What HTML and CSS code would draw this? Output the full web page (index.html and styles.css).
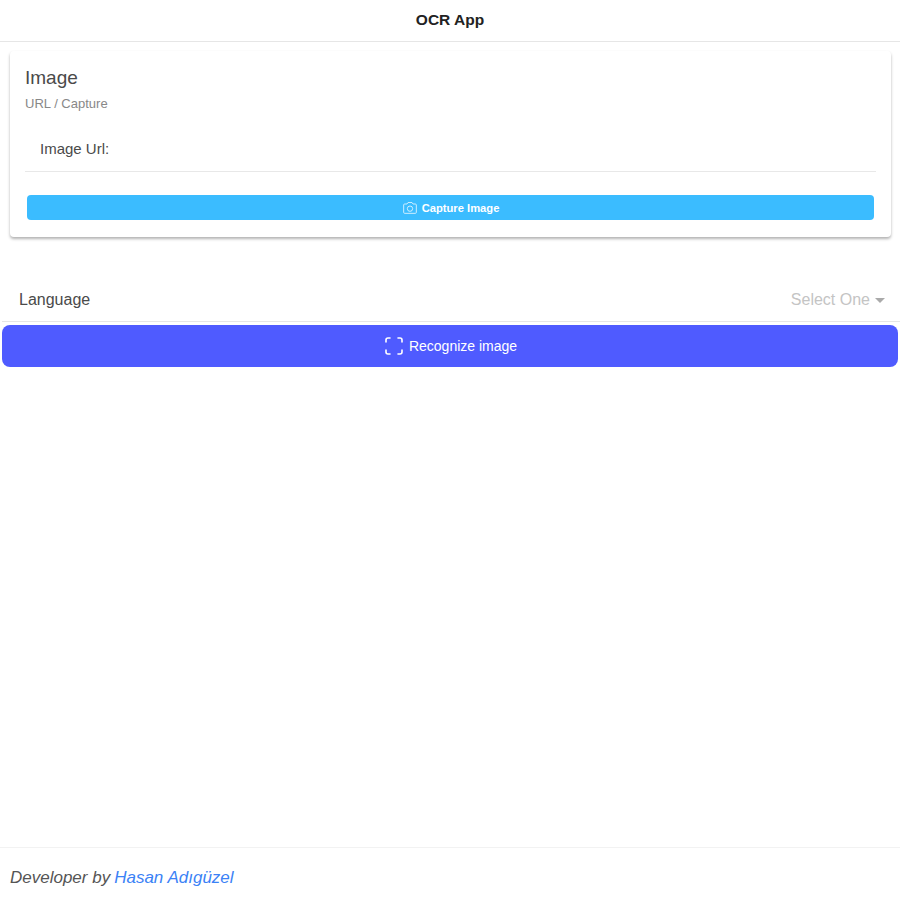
FILE: index.html
```html
<!DOCTYPE html>
<html lang="en">
<head>
    <meta charset="UTF-8">
    <meta name="viewport" content="width=device-width, initial-scale=1.0">
    <title>OCR App</title>
    <link rel="stylesheet" href="styles.css">
</head>
<body>
    <div class="toolbar">OCR App</div>

    <div class="content">
        <div class="card">
            <div class="card-title">Image</div>
            <div class="card-subtitle">URL / Capture</div>
            <label class="url-row">
                <span class="url-label">Image Url:</span>
                <input class="url-input" type="text">
            </label>
            <button class="btn btn-capture">
                <svg class="btn-icon-small" viewBox="0 0 24 24" fill="none" stroke="currentColor" stroke-width="1.4">
                    <path d="M2.5 7.5a1.5 1.5 0 0 1 1.5-1.5h3.5l1.5-2.2h6l1.5 2.2h3.5a1.5 1.5 0 0 1 1.5 1.5v11a1.5 1.5 0 0 1-1.5 1.5h-16a1.5 1.5 0 0 1-1.5-1.5z"/>
                    <circle cx="12" cy="13" r="4"/>
                </svg>
                Capture Image
            </button>
        </div>

        <div class="select-row">
            <span class="select-label">Language</span>
            <span class="select-value">Select One</span>
            <span class="select-arrow"></span>
        </div>

        <button class="btn btn-recognize">
            <svg class="btn-icon" viewBox="0 0 20 20" fill="none" stroke="currentColor" stroke-width="1.6" stroke-linecap="round">
                <path d="M2 6V4a2 2 0 0 1 2-2h2M14 2h2a2 2 0 0 1 2 2v2M18 14v2a2 2 0 0 1-2 2h-2M6 18H4a2 2 0 0 1-2-2v-2"/>
            </svg>
            Recognize image
        </button>
    </div>

    <div class="footer">Developer by <a class="footer-link" href="#">Hasan Adıgüzel</a></div>
</body>
</html>
```

FILE: styles.css
```css
* {
    box-sizing: border-box;
}

html, body {
    height: 100%;
}

body {
    margin: 0;
    display: flex;
    flex-direction: column;
    font-family: "Liberation Sans", Arial, sans-serif;
    background: #fff;
    color: #444;
}

.toolbar {
    height: 42px;
    flex-shrink: 0;
    display: flex;
    align-items: center;
    justify-content: center;
    padding-bottom: 2px;
    border-bottom: 1px solid #e6e6e6;
    font-size: 15.5px;
    font-weight: bold;
    color: #222;
}

.content {
    flex: 1;
    padding: 0 2px;
}

.card {
    display: flex;
    flex-direction: column;
    margin: 9px 7px 0 8px;
    height: 186px;
    padding: 15px 15px 0;
    background: #fff;
    border-radius: 4px;
    box-shadow: 0 2px 3px rgba(0, 0, 0, .3);
}

.card-title {
    font-size: 19px;
    line-height: 24px;
    color: #4a4a4a;
}

.card-subtitle {
    margin-top: 6px;
    font-size: 13px;
    line-height: 16px;
    color: #888;
}

.url-row {
    display: flex;
    align-items: center;
    height: 49px;
    margin-top: 11px;
    padding: 3px 0 0 15px;
    border-bottom: 1px solid #e8e8e8;
}

.url-label {
    font-size: 15px;
    color: #4a4a4a;
}

.url-input {
    flex: 1;
    border: 0;
    outline: none;
    background: transparent;
}

.btn {
    display: flex;
    align-items: center;
    justify-content: center;
    border: 0;
    color: #fff;
    font-family: inherit;
}

.btn-capture {
    gap: 4px;
    height: 25px;
    margin: 23px 2px 0;
    border-radius: 4px;
    background: #3bbcff;
    font-size: 11.2px;
    font-weight: bold;
}

.btn-icon-small {
    width: 16px;
    height: 16px;
    opacity: .8;
}

.select-row {
    display: flex;
    align-items: center;
    height: 44px;
    margin: 41px -2px 0 0;
    padding: 1px 15px 0 17px;
    border-bottom: 1px solid #e6e6e6;
    font-size: 16px;
}

.select-label {
    flex: 1;
    color: #4a4a4a;
}

.select-value {
    color: #c4c4c4;
}

.select-arrow {
    margin-left: 5px;
    border-left: 5px solid transparent;
    border-right: 5px solid transparent;
    border-top: 5px solid #aaa;
}

.btn-recognize {
    gap: 5px;
    width: 100%;
    height: 42px;
    margin-top: 3px;
    padding-left: 7px;
    border-radius: 8px;
    background: #4f5bff;
    font-size: 14px;
}

.btn-icon {
    width: 20px;
    height: 20px;
}

.footer {
    height: 53px;
    flex-shrink: 0;
    display: flex;
    align-items: center;
    gap: 4px;
    padding: 8px 10px 0;
    border-top: 1px solid #f2f2f2;
    font-size: 17px;
    font-style: italic;
    color: #555;
}

.footer-link {
    color: #3b82f6;
    text-decoration: none;
}
```
